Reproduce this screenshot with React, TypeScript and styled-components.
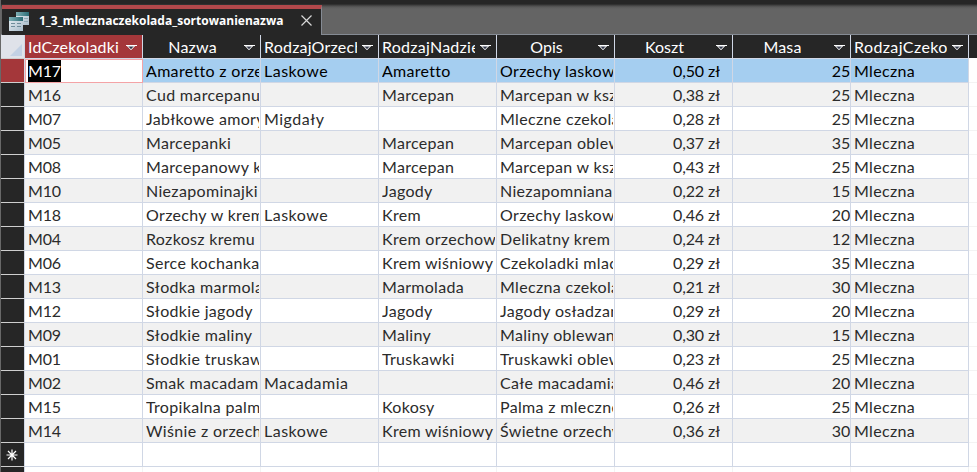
import React from "react";
import styled, { createGlobalStyle } from "styled-components";

const Global = createGlobalStyle`
  * { box-sizing: border-box; }
  html, body { margin: 0; padding: 0; background: #fff; overflow: hidden; }
`;

const Window = styled.div`
  width: 977px;
  height: 472px;
  overflow: hidden;
  display: flex;
  flex-direction: column;
  background: #fff;
  border-left: 1px solid #686868;
  font-family: Lato, "Liberation Sans", sans-serif;
`;

const TabStrip = styled.div`
  height: 35px;
  flex: none;
  padding: 5px 0 0 1px;
  background: linear-gradient(#262626 0 4px, #3c3c3c 5px, #5a5a5a 7px, #646464 9px);
  border-bottom: 1px solid #858b94;
`;

const Tab = styled.div`
  width: 320px;
  height: 30px;
  display: flex;
  align-items: center;
  padding: 1px 0 0 7px;
  background: #262626;
  border-top: 4px solid #b2484b;
  border-right: 1px solid #858b94;
`;

const TabTitle = styled.span`
  width: 247px;
  margin: -3px 0 0 8px;
  font: bold 12px/16px "Open Sans", sans-serif;
  letter-spacing: 0.01px;
  color: #fff;
  white-space: nowrap;
`;

const CloseIcon = styled.svg`
  margin: -4px 0 0 15px;
`;

const Row = styled.div`
  display: flex;
  height: 24px;
  flex: none;
`;

const Selector = styled.div<{ $tone?: "active" | "corner" }>`
  width: 24px;
  flex: none;
  display: flex;
  align-items: center;
  justify-content: center;
  background: ${(p) => (p.$tone === "active" ? "#a4373a" : p.$tone === "corner" ? "#dfe2e9" : "#262626")};
  border-bottom: 1px solid #cfcfcf;
  border-right: 1px solid #d0d7e5;
  padding: ${(p) => (p.$tone === "corner" ? "6px 0 0 6px" : "0 1px 0 0")};
`;

const HeaderCell = styled.div<{ $active?: boolean }>`
  width: 118px;
  flex: none;
  display: flex;
  align-items: center;
  background: ${(p) => (p.$active ? "#a4373a" : "#262626")};
  border-right: 1px solid #d0d7e5;
  border-bottom: 1px solid #d0d7e5;
`;

const HeaderText = styled.span<{ $center?: boolean; $tracking: number }>`
  width: 93px;
  margin: 0 4px 0 3px;
  flex: none;
  overflow: hidden;
  white-space: nowrap;
  text-align: ${(p) => (p.$center ? "center" : "left")};
  font-size: 16px;
  line-height: 22px;
  letter-spacing: ${(p) => p.$tracking}px;
  color: #fff;
`;

const FilterArrow = styled.svg`
  flex: none;
  margin-top: 2px;
`;

const HeaderRest = styled.div`
  flex: 1;
  background: #262626;
  height: 23px;
`;

const Cell = styled.div<{ $right?: boolean; $money?: boolean; $shaded?: boolean; $current?: boolean; $tracking?: number }>`
  width: 118px;
  flex: none;
  height: 24px;
  padding: 0 ${(p) => (p.$money ? "12px" : p.$right ? "0" : "1px")} 0 3px;
  text-align: ${(p) => (p.$right ? "right" : "left")};
  border-right: 1px solid #d0d7e5;
  border-bottom: 1px solid #d0d7e5;
  background: ${(p) => (p.$current ? "#a5cef0" : p.$shaded ? "#f1f1f1" : "#fff")};
  color: ${(p) => (p.$current ? "#000" : "#2b2b2b")};
  font-size: 16px;
  letter-spacing: ${(p) => p.$tracking ?? 0}px;
`;

const CellText = styled.div`
  overflow: hidden;
  white-space: nowrap;
  height: 23px;
  line-height: 24px;
`;

const EditCell = styled.div`
  width: 118px;
  flex: none;
  height: 24px;
  padding: 1px 0 0 3px;
  background: #fff;
  border-bottom: 1px solid #f4a3a6;
  border-right: 1px solid #f4a3a6;
  box-shadow: inset 1px 1px 0 #f4a3a6;
`;

const Selection = styled.div`
  height: 22px;
  width: 33px;
  background: #000;
  color: #fff;
  font-size: 16px;
  line-height: 22px;
  letter-spacing: -0.2px;
`;

const RowRest = styled.div`
  flex: 1;
  border-bottom: 1px solid #f3f3f3;
`;

const FaintCell = styled.div`
  width: 118px;
  flex: none;
  border-right: 1px solid #f3f3f3;
`;

const FilterIcon = () => (
  <FilterArrow width="12" height="8" viewBox="0 0 12 8">
    <path d="M2.500 2L6 5.800L9.500 2Z" fill="#33394b" stroke="#fff" />
    <path d="M.5 1.500H11.500" stroke="#fff" shapeRendering="crispEdges" />
  </FilterArrow>
);

const TabIcon = styled.svg`
  margin-top: -2px;
  flex: none;
`;

const QueryIcon = () => (
  <TabIcon width="22" height="20" viewBox="0 0 22 20">
    <defs>
      <linearGradient id="bar" x1="0" x2="1">
        <stop offset="0" stopColor="#7fb0b6" />
        <stop offset="1" stopColor="#2a6c76" />
      </linearGradient>
      <linearGradient id="sheet" x1="0" x2="1" y1="0" y2="1">
        <stop offset="0" stopColor="#e8eff3" />
        <stop offset="1" stopColor="#a9bdcb" />
      </linearGradient>
    </defs>
    <rect x="7" y="0" width="13" height="13" fill="url(#sheet)" />
    <rect x="7" y="0" width="13" height="4" fill="url(#bar)" />
    <path d="M9 6.500h4M15 6.500h4M15 9.500h4" stroke="#8fa9b5" />
    <rect x="0" y="5" width="14" height="14" fill="url(#sheet)" />
    <rect x="0" y="5" width="14" height="4" fill="url(#bar)" />
    <path d="M2 11.500h4M8 11.500h4M2 14.500h4M8 14.500h4" stroke="#6f8d9b" />
  </TabIcon>
);

const columns = [
  { name: "IdCzekoladki", center: false, head: 0.2, body: -0.2 },
  { name: "Nazwa", center: true, head: 0.2, body: 0.33 },
  { name: "RodzajOrzechow", center: false, head: 0.2, body: 0.5 },
  { name: "RodzajNadzienia", center: false, head: 0.25, body: 0.3 },
  { name: "Opis", center: true, head: 0, body: 0.33 },
  { name: "Koszt", center: true, head: 0, body: -0.1 },
  { name: "Masa", center: true, head: 0.2, body: -0.2 },
  { name: "RodzajCzeko", center: false, head: 0.4, body: 0.35 },
];

const rows = [
  ["M17", "Amaretto z orzechami", "Laskowe", "Amaretto", "Orzechy laskowe", "0,50 zł", "25"],
  ["M16", "Cud marcepanu", "", "Marcepan", "Marcepan w kształcie", "0,38 zł", "25"],
  ["M07", "Jabłkowe amory", "Migdały", "", "Mleczne czekoladki", "0,28 zł", "25"],
  ["M05", "Marcepanki", "", "Marcepan", "Marcepan oblewany", "0,37 zł", "35"],
  ["M08", "Marcepanowy krem", "", "Marcepan", "Marcepan w kształcie", "0,43 zł", "25"],
  ["M10", "Niezapominajki", "", "Jagody", "Niezapomniana", "0,22 zł", "15"],
  ["M18", "Orzechy w kremie", "Laskowe", "Krem", "Orzechy laskowe", "0,46 zł", "20"],
  ["M04", "Rozkosz kremu", "", "Krem orzechowy", "Delikatny krem", "0,24 zł", "12"],
  ["M06", "Serce kochanka", "", "Krem wiśniowy", "Czekoladki mlaczne", "0,29 zł", "35"],
  ["M13", "Słodka marmolada", "", "Marmolada", "Mleczna czekolada", "0,21 zł", "30"],
  ["M12", "Słodkie jagody", "", "Jagody", "Jagody osładzane", "0,29 zł", "20"],
  ["M09", "Słodkie maliny", "", "Maliny", "Maliny oblewane", "0,30 zł", "15"],
  ["M01", "Słodkie truskawki", "", "Truskawki", "Truskawki oblewane", "0,23 zł", "25"],
  ["M02", "Smak macadamii", "Macadamia", "", "Całe macadamia", "0,46 zł", "20"],
  ["M15", "Tropikalna palma", "", "Kokosy", "Palma z mlecznej", "0,26 zł", "25"],
  ["M14", "Wiśnie z orzechami", "Laskowe", "Krem wiśniowy", "Świetne orzechy", "0,36 zł", "30"],
];

export default function App() {
  return (
    <Window>
      <Global />
      <TabStrip>
        <Tab>
          <QueryIcon />
          <TabTitle>1_3_mlecznaczekolada_sortowanienazwa</TabTitle>
          <CloseIcon width="11" height="11" viewBox="0 0 11 11">
            <path d="M.5.5l10 10M10.5.5l-10 10" stroke="#d8d8d8" strokeWidth="1.200" />
          </CloseIcon>
        </Tab>
      </TabStrip>
      <Row>
        <Selector $tone="corner">
          <svg width="12" height="12"><path d="M12 0V12H0Z" fill="#c3d1e4" /></svg>
        </Selector>
        {columns.map((c, i) => (
          <HeaderCell key={c.name} $active={i === 0}>
            <HeaderText $center={c.center} $tracking={c.head}>{c.name}</HeaderText>
            <FilterIcon />
          </HeaderCell>
        ))}
        <HeaderRest />
      </Row>
      {rows.map((r, i) => (
        <Row key={r[0]}>
          <Selector $tone={i === 0 ? "active" : undefined} />
          {[...r, "Mleczna"].map((v, j) =>
            i === 0 && j === 0 ? (
              <EditCell key={j}><Selection>{v}</Selection></EditCell>
            ) : (
              <Cell
                key={j}
                $right={j === 5 || j === 6}
                $money={j === 5}
                $shaded={i % 2 === 1}
                $current={i === 0}
                $tracking={columns[j].body}
              >
                <CellText>{v}</CellText>
              </Cell>
            )
          )}
          <RowRest />
        </Row>
      ))}
      <Row>
        <Selector>
          <svg width="12" height="12" viewBox="0 0 12 12">
            <path d="M6 .5v11M.5 6h11M2 2l8 8M10 2l-8 8" stroke="#fff" strokeWidth="1.200" />
          </svg>
        </Selector>
        {columns.map((c) => <Cell key={c.name} />)}
        <RowRest />
      </Row>
      <Row>
        <Selector />
        {columns.map((c) => <FaintCell key={c.name} />)}
      </Row>
    </Window>
  );
}
